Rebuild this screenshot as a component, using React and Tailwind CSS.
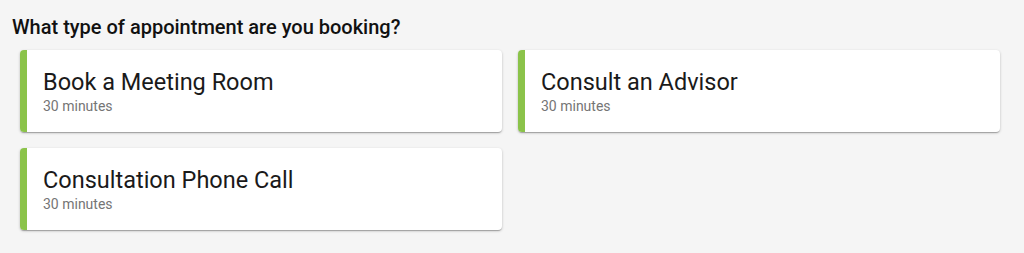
const appointmentTypes = [
  { title: "Book a Meeting Room", duration: "30 minutes" },
  { title: "Consult an Advisor", duration: "30 minutes" },
  { title: "Consultation Phone Call", duration: "30 minutes" },
];

export default function App() {
  return (
    <div className="min-h-[253px] w-[1024px] bg-[#f5f5f5] pt-[14px] pl-[12px] pr-[24px] font-['Roboto',sans-serif]">
      <h2 className="text-[20px] font-medium leading-[26px] text-[#111]">
        What type of appointment are you booking?
      </h2>
      <div className="mt-[10px] ml-[8px] grid grid-cols-2 gap-[16px]">
        {appointmentTypes.map((t) => (
          <div
            key={t.title}
            className="flex h-[82px] overflow-hidden rounded-[4px] bg-white shadow-[0_1px_3px_rgba(0,0,0,0.2),0_1px_1px_rgba(0,0,0,0.14),0_2px_1px_-1px_rgba(0,0,0,0.12)] cursor-pointer"
          >
            <div className="w-[7px] shrink-0 bg-[#8bc34a]" />
            <div className="flex flex-col pl-[16px] pt-[18px]">
              <span className="text-[23.5px] leading-[28px] text-[#1a1a1a]">{t.title}</span>
              <span className="text-[14px] leading-[20px] text-[#757575]">{t.duration}</span>
            </div>
          </div>
        ))}
      </div>
    </div>
  );
}
